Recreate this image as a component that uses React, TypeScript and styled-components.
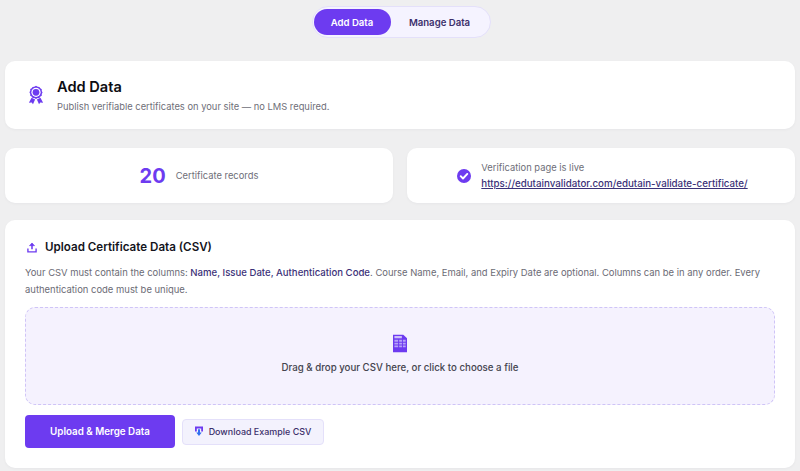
import React from "react";
import styled, { createGlobalStyle } from "styled-components";

const Global = createGlobalStyle`
  html, body { margin: 0; padding: 0; background: #efeff0; }
  body { font-family: Inter, "Liberation Sans", sans-serif; overflow: hidden; }
  * { box-sizing: border-box; }
`;

const Page = styled.div`
  width: 800px;
  height: 471px;
  padding: 6px 5px 0;
  display: flex;
  flex-direction: column;
  overflow: hidden;
`;

const TabBar = styled.div`
  align-self: center;
  display: flex;
  align-items: center;
  width: 179px;
  height: 32px;
  margin: 0 0 23px 2px;
  padding: 0 1px;
  border-radius: 16px;
  background: #f5f3ff;
  border: 1px solid #e4e0fa;
`;

const Tab = styled.div<{ $active?: boolean }>`
  height: 26px;
  width: ${(p) => (p.$active ? "77px" : "98px")};
  display: flex;
  align-items: center;
  justify-content: center;
  border-radius: 13px;
  font-size: 9.6px;
  font-weight: 600;
  color: ${(p) => (p.$active ? "#ffffff" : "#3b2f6b")};
  background: ${(p) => (p.$active ? "#6d3bf0" : "transparent")};
`;

const Card = styled.section`
  background: #ffffff;
  border-radius: 10px;
  box-shadow: 0 1px 3px rgba(30, 20, 60, 0.04);
`;

const HeaderCard = styled(Card)`
  height: 68px;
  display: flex;
  align-items: center;
  gap: 13px;
  padding-left: 23px;
  margin-bottom: 19px;
`;

const HeaderText = styled.div`
  display: flex;
  flex-direction: column;
  gap: 4px;
`;

const Title = styled.h1`
  margin: 0;
  font-size: 14.6px;
  line-height: 18px;
  font-weight: 600;
  color: #0d0d12;
`;

const Subtitle = styled.p`
  margin: 0;
  font-size: 9.35px;
  line-height: 13px;
  color: #6e6e78;
`;

const StatsRow = styled.div`
  display: grid;
  grid-template-columns: 388px 388px;
  gap: 14px;
  margin-bottom: 17px;
`;

const StatCard = styled(Card)`
  height: 55px;
  display: flex;
  align-items: center;
  justify-content: center;
`;

const CountCard = styled(StatCard)`
  gap: 10px;
`;

const Count = styled.span`
  font-size: 20px;
  line-height: 26px;
  font-weight: 700;
  color: #6d3bf0;
`;

const StatLabel = styled.span`
  font-size: 9.4px;
  line-height: 16px;
  color: #6e6e78;
`;

const LiveCard = styled(StatCard)`
  gap: 10px;
  padding-left: 3px;
`;

const LiveText = styled.div`
  display: flex;
  flex-direction: column;
`;

const LiveLink = styled.a`
  font-size: 9.75px;
  line-height: 15px;
  font-weight: 500;
  color: #3b3178;
  text-decoration: underline;
`;

const UploadCard = styled(Card)`
  height: 248px;
  padding: 18px 20px 0;
  display: flex;
  flex-direction: column;
`;

const UploadHead = styled.div`
  display: flex;
  align-items: center;
  gap: 8px;
  height: 18px;
  margin-bottom: 9px;
  padding-left: 2px;
`;

const UploadTitle = styled.h2`
  margin: 0;
  font-size: 11.6px;
  line-height: 16px;
  font-weight: 600;
  color: #14141c;
`;

const Help = styled.p`
  margin: 0 0 9px;
  font-size: 9.45px;
  line-height: 16.5px;
  color: #6b6b75;
`;

const Strong = styled.span`
  font-size: 9.6px;
  font-weight: 500;
  color: #3b3178;
`;

const DropZone = styled.div`
  height: 98px;
  display: flex;
  flex-direction: column;
  align-items: center;
  justify-content: center;
  gap: 8px;
  padding-bottom: 4px;
  border: 1px dashed #cfc4f7;
  border-radius: 10px;
  background: #f5f2fe;
`;

const DropText = styled.span`
  font-size: 9.7px;
  line-height: 14px;
  font-weight: 500;
  color: #44444e;
`;

const Actions = styled.div`
  display: flex;
  align-items: center;
  gap: 7px;
  margin-top: 10px;
`;

const PrimaryButton = styled.button`
  width: 150px;
  height: 33px;
  border: 0;
  border-radius: 4px;
  background: #6d3bf0;
  color: #ffffff;
  font-family: inherit;
  font-size: 9.8px;
  font-weight: 600;
`;

const SecondaryButton = styled.button`
  width: 142px;
  height: 26px;
  display: flex;
  align-items: center;
  justify-content: center;
  gap: 6px;
  border: 1px solid #e4e0fa;
  border-radius: 4px;
  background: #f3f2fd;
  color: #3b2f6b;
  font-family: inherit;
  font-size: 8.95px;
  font-weight: 500;
`;

const Award = () => (
  <svg width="16" height="20" viewBox="0 0 18 22" fill="#6d3bf0" aria-hidden="true">
    <path d="M5.2 1.9 7 1.8 9 .6l2 1.2 1.8.1 1.1 1.6 1.6.9v2l.9 1.7-.9 1.7v2l-1.6.9-1.1 1.6-1.8.1-2 1.2-2-1.2-1.8-.1-1.1-1.6-1.6-.9v-2L1.6 8l.9-1.7v-2l1.6-.9z" />
    <circle cx="9" cy="8" r="5.2" fill="#fff" />
    <circle cx="9" cy="8" r="3.8" />
    <path d="M4 14 8 16.2 5.6 21.5 4.2 19.4 1 19.8zM14 14 10 16.2 12.4 21.5 13.8 19.4 17 19.8z" />
  </svg>
);

const CheckBadge = () => (
  <svg width="14" height="14" viewBox="0 0 14 14" aria-hidden="true">
    <circle cx="7" cy="7" r="7" fill="#6d3bf0" />
    <path d="M3.7 7.2 6 9.5l4.3-4.6" fill="none" stroke="#fff" strokeWidth="1.9" strokeLinecap="round" strokeLinejoin="round" />
  </svg>
);

const UploadIcon = () => (
  <svg width="10" height="11" viewBox="0 0 11 12" fill="none" stroke="#6d3bf0" aria-hidden="true">
    <path d="M1 7v3.8h9V7" strokeWidth="1.5" />
    <path d="M5.5 8V1.5" strokeWidth="1.7" />
    <path d="M2.6 4 5.5 1 8.4 4z" fill="#6d3bf0" strokeWidth="0.6" />
  </svg>
);

const SheetIcon = () => (
  <svg width="14" height="19" viewBox="0 0 15 19" aria-hidden="true">
    <path d="M0 0h11l4 4v15H0z" fill="#6d3bf0" />
    <path d="M1.5 1.5h8v2.4h-8z" fill="#cfc2fa" />
    <path d="M1.5 5.6h4v2h-4zM6.6 5.6h3v2h-3zM10.6 5.6h3v2h-3zM1.5 8.6h4v2h-4zM6.6 8.6h3v2h-3zM10.6 8.6h3v2h-3zM1.5 11.6h4v2h-4zM6.6 11.6h3v2h-3zM10.6 11.6h3v2h-3z" fill="#b7a4f8" />
  </svg>
);

const DownloadIcon = () => (
  <svg width="8" height="11" viewBox="0 0 9 11" aria-hidden="true">
    <path d="M0 0h9v5.5H7V2H2v3.5H0z" fill="#6d3bf0" />
    <path d="M3.4 3h2.2v3.6h2L4.5 10.6 1.4 6.6h2z" fill="#2f6ff0" />
  </svg>
);

export default function App() {
  return (
    <Page>
      <Global />
      <TabBar>
        <Tab $active>Add Data</Tab>
        <Tab>Manage Data</Tab>
      </TabBar>
      <HeaderCard>
        <Award />
        <HeaderText>
          <Title>Add Data</Title>
          <Subtitle>Publish verifiable certificates on your site — no LMS required.</Subtitle>
        </HeaderText>
      </HeaderCard>
      <StatsRow>
        <CountCard>
          <Count>20</Count>
          <StatLabel>Certificate records</StatLabel>
        </CountCard>
        <LiveCard>
          <CheckBadge />
          <LiveText>
            <StatLabel>Verification page is live</StatLabel>
            <LiveLink href="#">https://edutainvalidator.com/edutain-validate-certificate/</LiveLink>
          </LiveText>
        </LiveCard>
      </StatsRow>
      <UploadCard>
        <UploadHead>
          <UploadIcon />
          <UploadTitle>Upload Certificate Data (CSV)</UploadTitle>
        </UploadHead>
        <Help>
          Your CSV must contain the columns: <Strong>Name, Issue Date, Authentication Code</Strong>. Course Name, Email, and Expiry Date are optional. Columns can be in any order. Every authentication code must be unique.
        </Help>
        <DropZone>
          <SheetIcon />
          <DropText>Drag &amp; drop your CSV here, or click to choose a file</DropText>
        </DropZone>
        <Actions>
          <PrimaryButton>Upload &amp; Merge Data</PrimaryButton>
          <SecondaryButton>
            <DownloadIcon />
            Download Example CSV
          </SecondaryButton>
        </Actions>
      </UploadCard>
    </Page>
  );
}
